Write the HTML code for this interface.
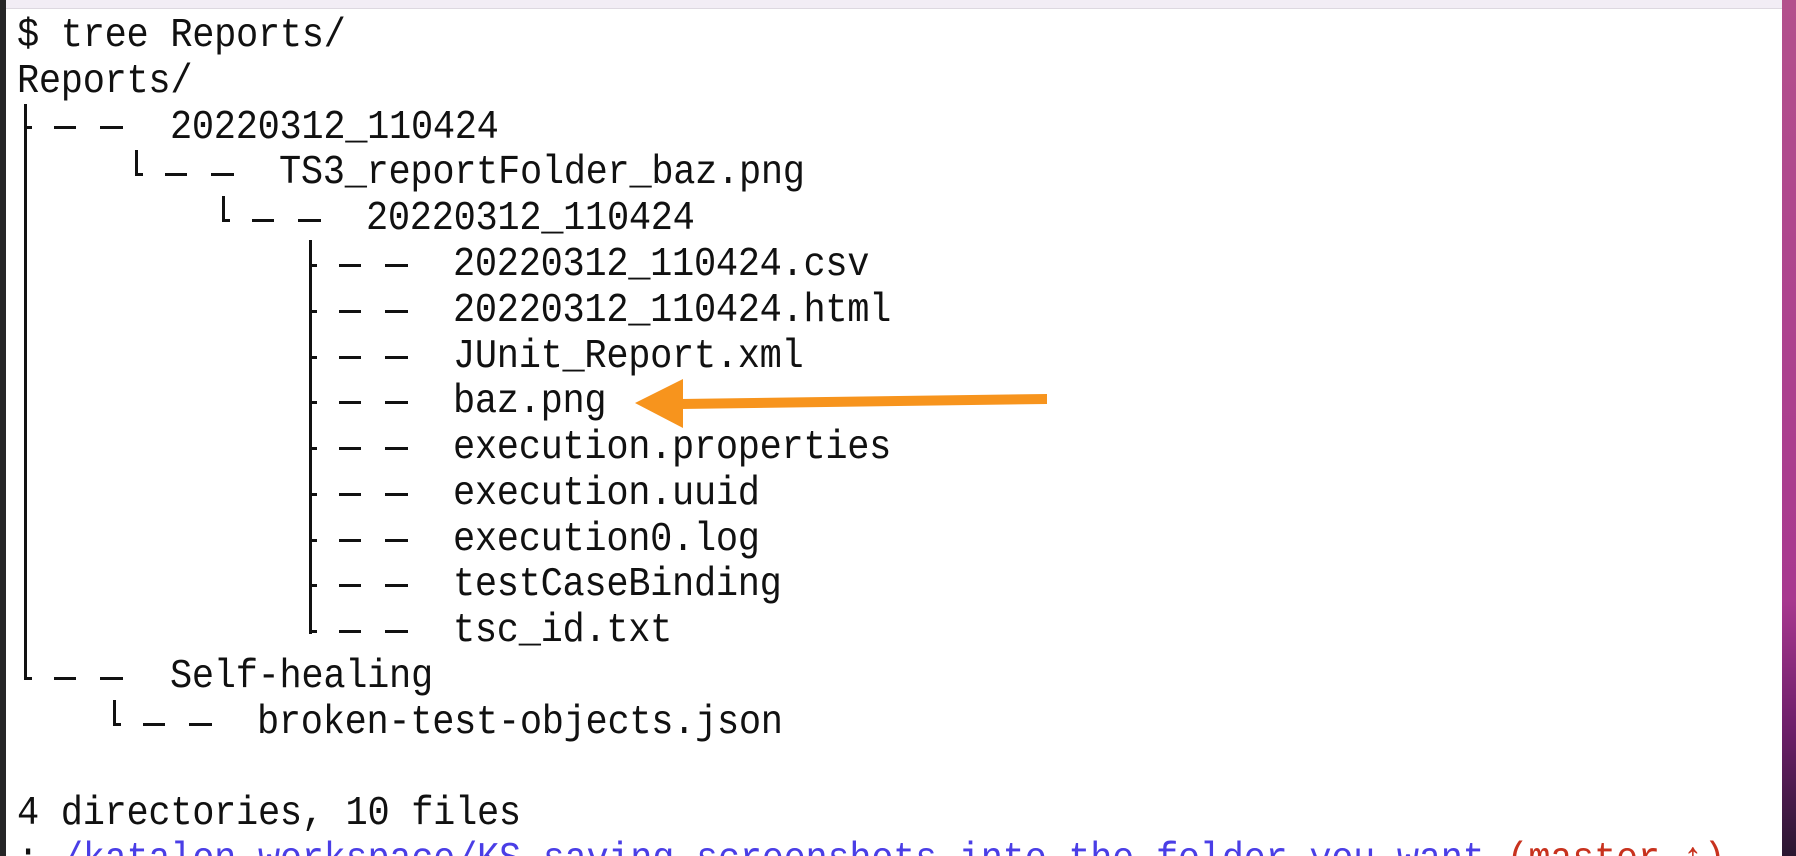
<!DOCTYPE html>
<html><head><meta charset="utf-8"><style>
html,body{margin:0;padding:0;width:1796px;height:856px;overflow:hidden;background:#fff;position:relative}
.top{position:absolute;left:0;top:0;width:1796px;height:8px;background:#f2edf5;border-bottom:1px solid #ddd8e0}
.left{position:absolute;left:0;top:0;width:6px;height:856px;background:#262627}
.right{position:absolute;left:1782px;top:0;width:14px;height:856px;background:linear-gradient(#b3508c,#a8388f 70%,#6e1f6a 85%,#2a1730)}
.r{position:absolute;font-family:"Liberation Mono",monospace;font-size:37px;letter-spacing:-0.3px;line-height:45.8px;height:45.8px;white-space:pre;color:#111;transform:scaleY(1.1);transform-origin:0 33px}
.v{position:absolute;width:3px;background:#111}
</style></head><body>
<div class="top"></div>
<div class="left"></div>
<div class="right"></div>
<div class="r" style="left:17px;top:15px">$ tree Reports/</div>
<div class="r" style="left:17px;top:61px">Reports/</div>
<div class="r" style="left:170px;top:107px">20220312_110424</div>
<div class="r" style="left:279px;top:152px">TS3_reportFolder_baz.png</div>
<div class="r" style="left:366px;top:198px">20220312_110424</div>
<div class="r" style="left:453px;top:244px">20220312_110424.csv</div>
<div class="r" style="left:453px;top:290px">20220312_110424.html</div>
<div class="r" style="left:453px;top:336px">JUnit_Report.xml</div>
<div class="r" style="left:453px;top:381px">baz.png</div>
<div class="r" style="left:453px;top:427px">execution.properties</div>
<div class="r" style="left:453px;top:473px">execution.uuid</div>
<div class="r" style="left:453px;top:519px">execution0.log</div>
<div class="r" style="left:453px;top:564px">testCaseBinding</div>
<div class="r" style="left:453px;top:610px">tsc_id.txt</div>
<div class="r" style="left:170px;top:656px">Self-healing</div>
<div class="r" style="left:257px;top:702px">broken-test-objects.json</div>
<div class="r" style="left:17px;top:793px">4 directories, 10 files</div>
<div class="r" style="left:17px;top:839px">: <span style="color:#4a3ee6">/katalon-workspace/KS-saving-screenshots-into-the-folder-you-want</span> <span style="color:#c8321e">(master ↑)</span></div>

<div class="v" style="left:24px;top:104px;height:576px"></div>
<div class="v" style="left:309px;top:240px;height:394px"></div>
<div class="v" style="left:135px;top:150px;height:26px"></div>
<div class="v" style="left:222px;top:196px;height:26px"></div>
<div class="v" style="left:113px;top:700px;height:26px"></div>

<svg width="1796" height="856" style="position:absolute;left:0;top:0">
<g fill="#111">
<rect x="24" y="126" width="8" height="3"/><rect x="54" y="126" width="22" height="3"/><rect x="100" y="126" width="23" height="3"/>
<rect x="135" y="173" width="8" height="3"/><rect x="165" y="173" width="22" height="3"/><rect x="211" y="173" width="23" height="3"/>
<rect x="222" y="219" width="8" height="3"/><rect x="252" y="219" width="22" height="3"/><rect x="298" y="219" width="23" height="3"/>
<rect x="24" y="677" width="8" height="3"/><rect x="54" y="677" width="22" height="3"/><rect x="100" y="677" width="23" height="3"/>
<rect x="113" y="723" width="8" height="3"/><rect x="143" y="723" width="22" height="3"/><rect x="189" y="723" width="23" height="3"/>
<rect x="309" y="264" width="8" height="3"/><rect x="339" y="264" width="22" height="3"/><rect x="385" y="264" width="23" height="3"/>
<rect x="309" y="310" width="8" height="3"/><rect x="339" y="310" width="22" height="3"/><rect x="385" y="310" width="23" height="3"/>
<rect x="309" y="356" width="8" height="3"/><rect x="339" y="356" width="22" height="3"/><rect x="385" y="356" width="23" height="3"/>
<rect x="309" y="401" width="8" height="3"/><rect x="339" y="401" width="22" height="3"/><rect x="385" y="401" width="23" height="3"/>
<rect x="309" y="447" width="8" height="3"/><rect x="339" y="447" width="22" height="3"/><rect x="385" y="447" width="23" height="3"/>
<rect x="309" y="493" width="8" height="3"/><rect x="339" y="493" width="22" height="3"/><rect x="385" y="493" width="23" height="3"/>
<rect x="309" y="539" width="8" height="3"/><rect x="339" y="539" width="22" height="3"/><rect x="385" y="539" width="23" height="3"/>
<rect x="309" y="584" width="8" height="3"/><rect x="339" y="584" width="22" height="3"/><rect x="385" y="584" width="23" height="3"/>
<rect x="309" y="630" width="8" height="3"/><rect x="339" y="630" width="22" height="3"/><rect x="385" y="630" width="23" height="3"/>
</g>
<polygon points="635,403 683,379 683,428" fill="#f7941d"/>
<polygon points="680,399 1047,394 1047,404 680,409" fill="#f7941d"/>
</svg>
</body></html>
